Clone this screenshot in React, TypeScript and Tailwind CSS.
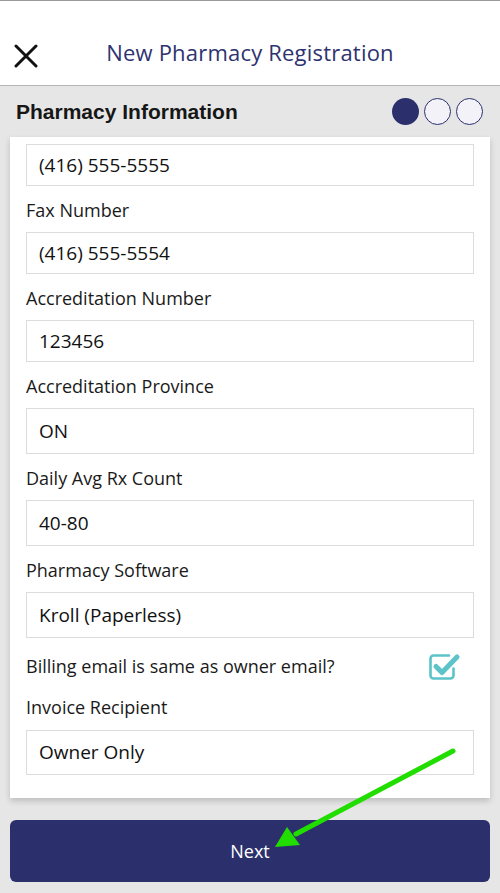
import React from "react";

const font = { fontFamily: "'Open Sans', Lato, sans-serif" };

function Field({ label, value, tall }: { label?: string; value: string; tall?: boolean }) {
  return (
    <div>
      {label && (
        <div className="flex h-[46px] items-center pt-[3px] text-[18px] text-[#1a1a1a]">{label}</div>
      )}
      <div
        className={`flex items-center border border-[#dcdcdc] bg-white px-3 text-[19px] text-[#111] ${
          tall ? "h-[46px]" : "h-[42px]"
        }`}
      >
        {value}
      </div>
    </div>
  );
}

function CheckIcon() {
  return (
    <svg width="34" height="30" viewBox="0 0 34 30" fill="none">
      <path
        d="M22 4.5H6.5a3 3 0 0 0-3 3v17a3 3 0 0 0 3 3h17a3 3 0 0 0 3-3v-7"
        stroke="#5cc3c8"
        strokeWidth="2.6"
        strokeLinecap="round"
      />
      <path
        d="M9 15.5l6 6L30 6"
        stroke="#5cc3c8"
        strokeWidth="5"
        strokeLinecap="round"
        strokeLinejoin="round"
      />
    </svg>
  );
}

export default function App() {
  return (
    <div className="relative h-[893px] w-[500px] overflow-hidden bg-[#e6e6e6]" style={font}>
      <header className="relative flex h-[86px] items-end border-t border-b border-t-[#9a9a9a] border-b-[#b5b5b5] bg-white pb-[16px]">
        <svg className="absolute left-[14px] top-[43px]" width="24" height="24" viewBox="0 0 24 24">
          <path d="M2 2L22 22M22 2L2 22" stroke="#111" strokeWidth="3" strokeLinecap="round" />
        </svg>
        <h1 className="w-full text-center text-[22px] tracking-[0.2px] text-[#2e3370]">
          New Pharmacy Registration
        </h1>
      </header>

      <div className="flex h-[51px] items-center justify-between pl-4 pr-[17px]">
        <h2 className="text-[21px] font-bold text-[#161616]" style={{ fontFamily: "'Liberation Sans', Arial, sans-serif" }}>
          Pharmacy Information
        </h2>
        <div className="flex gap-[5px]">
          <span className="h-[27px] w-[27px] rounded-full bg-[#2b306d]" />
          <span className="h-[27px] w-[27px] rounded-full border-[1.5px] border-[#2b306d] bg-[#f3f2f9]" />
          <span className="h-[27px] w-[27px] rounded-full border-[1.5px] border-[#2b306d] bg-[#f3f2f9]" />
        </div>
      </div>

      <main className="mx-[10px] h-[661px] overflow-hidden bg-white px-4 pt-[7px] shadow-[0_3px_6px_rgba(0,0,0,0.18)]">
        <Field value="(416) 555-5555" />
        <Field label="Fax Number" value="(416) 555-5554" />
        <Field label="Accreditation Number" value="123456" />
        <Field label="Accreditation Province" value="ON" tall />
        <Field label="Daily Avg Rx Count" value="40-80" tall />
        <Field label="Pharmacy Software" value="Kroll (Paperless)" tall />
        <div className="flex h-[56px] items-center justify-between pr-[13px]">
          <span className="text-[18px] text-[#1a1a1a]">Billing email is same as owner email?</span>
          <CheckIcon />
        </div>
        <div className="flex h-[36px] items-start text-[18px] text-[#1a1a1a]">Invoice Recipient</div>
        <div className="flex h-[45px] items-center border border-[#dcdcdc] px-3 text-[19px] text-[#111]">
          Owner Only
        </div>
      </main>

      <div className="px-[10px] pt-[22px]">
        <button className="flex h-[62px] w-full items-center justify-center rounded-[6px] bg-[#2b306d] text-[18px] text-white">
          Next
        </button>
      </div>

      <svg className="pointer-events-none absolute left-0 top-0" width="500" height="893" viewBox="0 0 500 893">
        <line x1="453" y1="751" x2="296" y2="834" stroke="#22dd00" strokeWidth="5" strokeLinecap="round" />
        <polygon points="275,847 287,827 300,845" fill="#22dd00" />
      </svg>
    </div>
  );
}
